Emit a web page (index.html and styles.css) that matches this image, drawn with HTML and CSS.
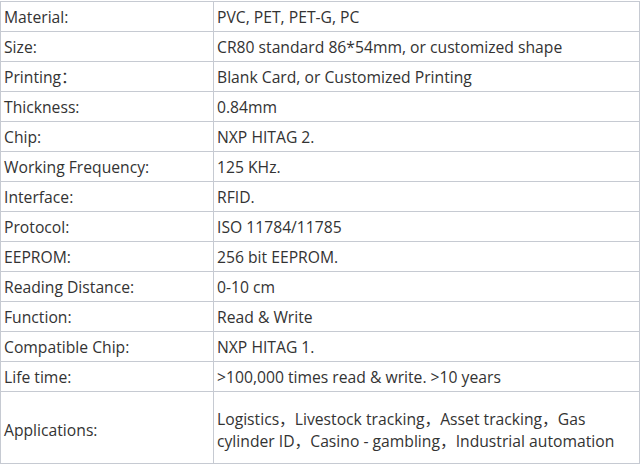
FILE: index.html
```html
<!DOCTYPE html>
<html>
<head>
<meta charset="utf-8">
<link rel="stylesheet" href="styles.css">
</head>
<body>
<table class="spec">
<colgroup><col class="c-label"><col class="c-value"></colgroup>
<tbody>
<tr><td>Material:</td><td>PVC, PET, PET-G, PC</td></tr>
<tr><td>Size:</td><td>CR80 standard 86*54mm, or customized shape</td></tr>
<tr><td>Printing：</td><td>Blank Card, or Customized Printing</td></tr>
<tr><td>Thickness:</td><td>0.84mm</td></tr>
<tr><td>Chip:</td><td>NXP HITAG 2.</td></tr>
<tr><td>Working Frequency:</td><td>125 KHz.</td></tr>
<tr><td>Interface:</td><td>RFID.</td></tr>
<tr><td>Protocol:</td><td>ISO 11784/11785</td></tr>
<tr><td>EEPROM:</td><td>256 bit EEPROM.</td></tr>
<tr><td>Reading Distance:</td><td>0-10 cm</td></tr>
<tr><td>Function:</td><td>Read &amp; Write</td></tr>
<tr><td>Compatible Chip:</td><td>NXP HITAG 1.</td></tr>
<tr><td>Life time:</td><td>&gt;100,000 times read &amp; write. &gt;10 years</td></tr>
<tr class="tall"><td>Applications:</td><td>Logistics，Livestock tracking，Asset tracking，Gas cylinder ID，Casino - gambling，Industrial automation</td></tr>
</tbody>
</table>
</body>
</html>
```
FILE: styles.css
```css
html, body {
  margin: 0;
  padding: 0;
  background: #ffffff;
}
body {
  padding-top: 1px;
}
.spec {
  border-collapse: collapse;
  width: 640px;
  table-layout: fixed;
  font-family: "Open Sans", "Noto Sans CJK SC", sans-serif;
  font-size: 15.7px;
  color: #333333;
}
.c-label { width: 213px; }
.spec td {
  border: 1px solid #c6cad2;
  height: 28px;
  padding: 1px 3px 0;
  vertical-align: middle;
  line-height: 22px;
}
.spec tr.tall td {
  height: 67px;
  padding-top: 4px;
}
```
